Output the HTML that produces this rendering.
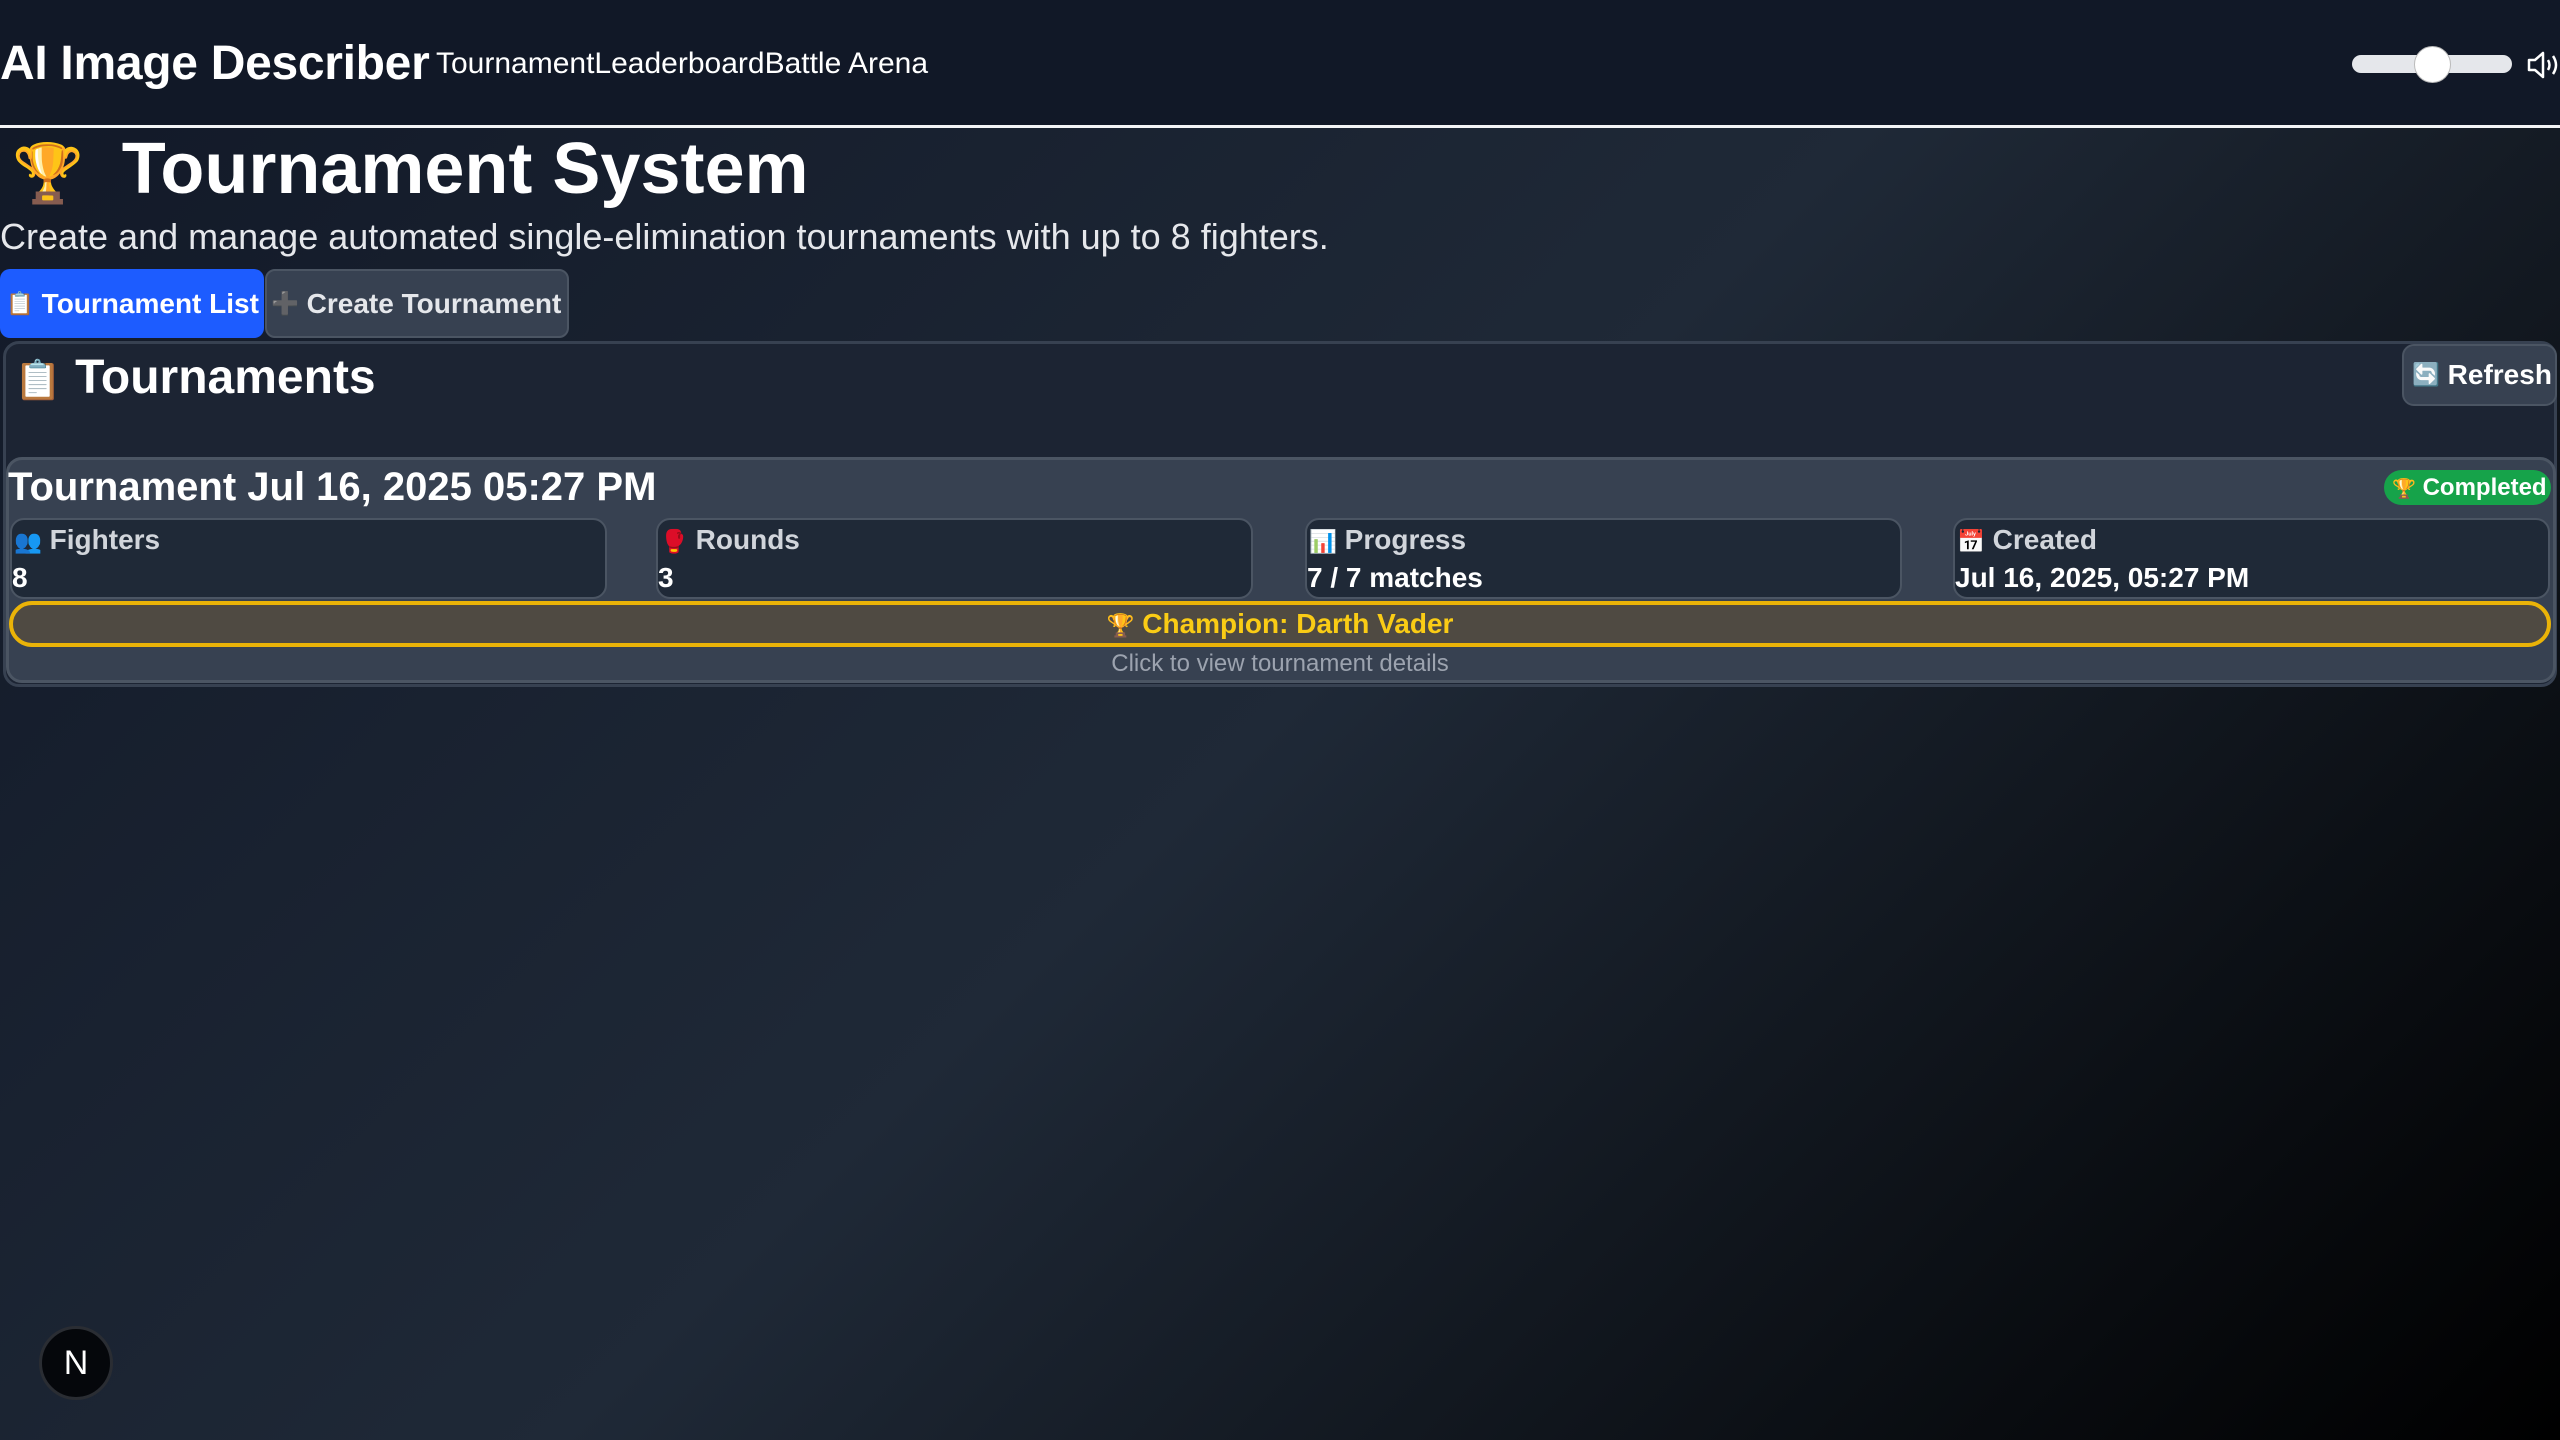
<!DOCTYPE html>
<html><head><meta charset="utf-8"><style>
*{box-sizing:border-box;margin:0;padding:0}
html,body{width:2560px;height:1440px;overflow:hidden}
body{font-family:"Liberation Sans",Arial,sans-serif;color:#fff;position:relative;
background:linear-gradient(135deg,#111827 0%,#1f2937 50%,#000 100%);}
.abs{position:absolute}
header{position:absolute;left:0;top:0;width:2560px;height:128px;background:#111827;border-bottom:3px solid #f3f4f6}
.logo{left:0;top:36px;font-size:48px;font-weight:bold;white-space:nowrap;letter-spacing:-0.3px}
.nav{left:436px;top:47px;font-size:30px;white-space:nowrap}
.track{left:2352px;top:55px;width:160px;height:18px;border-radius:9px;background:#e5e7eb}
.thumb{left:2414px;top:46px;width:37px;height:37px;border-radius:50%;background:#fff;border:1px solid #bbb}
h1{position:absolute;left:12px;top:128px;font-size:72px;font-weight:bold;white-space:nowrap}
.e{font-size:0.8em}
.sub{left:0;top:216px;font-size:36px;color:#e5e7eb;white-space:nowrap}
.tab{top:269px;height:69px;border-radius:10px;font-size:28px;font-weight:bold;display:flex;align-items:center;white-space:nowrap}
.panel{left:3px;top:341px;width:2554px;height:346px;border:3px solid #374151;border-radius:16px;background:#1c2433}
.card{left:6px;top:457px;width:2550px;height:226px;background:#374151;border:3px solid #4b5563;border-radius:16px}
.stat{top:518px;height:81px;width:597px;background:#1f2937;border:2px solid #4b5563;border-radius:14px}
.lbl{position:absolute;left:0;top:4px;font-size:28px;font-weight:bold;color:#d1d5db;white-space:nowrap}
.val{position:absolute;left:0;top:42px;font-size:28px;font-weight:bold;white-space:nowrap}
.champ{left:9px;top:601px;width:2542px;height:46px;border:4px solid #eab308;border-radius:23px;background:#4f4a42;text-align:center;font-size:28px;font-weight:bold;color:#facc15;line-height:38px}
</style></head><body>
<header>
<div class="abs logo">AI Image Describer</div>
<div class="abs nav">TournamentLeaderboardBattle Arena</div>
<div class="abs track"></div><div class="abs thumb"></div>
<svg class="abs" style="left:2526px;top:50px" width="34" height="30" viewBox="0 0 34 30"><path d="M3 10h6l8-7v24l-8-7H3z" fill="none" stroke="#fff" stroke-width="2.5" stroke-linejoin="round"/><path d="M22 10q3 5 0 10M27 6q6 9 0 18" fill="none" stroke="#fff" stroke-width="2.5"/></svg>
</header>
<h1><span class="e" style="margin-right:18px">🏆</span> Tournament System</h1>
<div class="abs sub">Create and manage automated single-elimination tournaments with up to 8 fighters.</div>
<div class="abs tab" style="left:0;width:264px;background:#1d5cff;padding-left:6px"><span class="e">📋</span>&nbsp;Tournament List</div>
<div class="abs tab" style="left:265px;width:304px;background:#374151;border:2px solid #4b5563;color:#e5e7eb;padding-left:4px"><span class="e">➕</span>&nbsp;Create Tournament</div>
<div class="abs panel"></div>
<div class="abs" style="left:14px;top:350px;font-size:48px;font-weight:bold;white-space:nowrap"><span class="e">📋</span> Tournaments</div>
<div class="abs" style="left:2402px;top:344px;width:155px;height:62px;background:#374151;border:2px solid #4b5563;border-radius:12px;font-size:28px;font-weight:bold;display:flex;align-items:center;padding-left:8px;white-space:nowrap"><span class="e">🔄</span>&nbsp;Refresh</div>
<div class="abs card"></div>
<div class="abs" style="left:8px;top:465px;font-size:40px;font-weight:bold;white-space:nowrap">Tournament Jul 16, 2025 05:27 PM</div>
<div class="abs" style="left:2384px;top:470px;width:167px;height:35px;background:#16a34a;border-radius:18px;font-size:24px;font-weight:bold;line-height:35px;padding-left:8px;white-space:nowrap"><span class="e">🏆</span> Completed</div>
<div class="abs stat" style="left:10px"><div class="lbl" style="left:2px"><span class="e">👥</span> Fighters</div><div class="val">8</div></div>
<div class="abs stat" style="left:656px"><div class="lbl" style="left:2px"><span class="e">🥊</span> Rounds</div><div class="val">3</div></div>
<div class="abs stat" style="left:1305px"><div class="lbl" style="left:2px"><span class="e">📊</span> Progress</div><div class="val">7 / 7 matches</div></div>
<div class="abs stat" style="left:1953px"><div class="lbl" style="left:2px"><span class="e">📅</span> Created</div><div class="val">Jul 16, 2025, 05:27 PM</div></div>
<div class="abs champ"><span class="e">🏆</span> Champion: Darth Vader</div>
<div class="abs" style="left:0;width:2560px;top:650px;text-align:center;font-size:24px;color:#9ca3af">Click to view tournament details</div>
<div class="abs" style="left:39px;top:1326px;width:74px;height:74px;border-radius:50%;background:#05070b;border:3px solid #2a2d33;color:#fff;font-size:34px;text-align:center;line-height:68px">N</div>
</body></html>
